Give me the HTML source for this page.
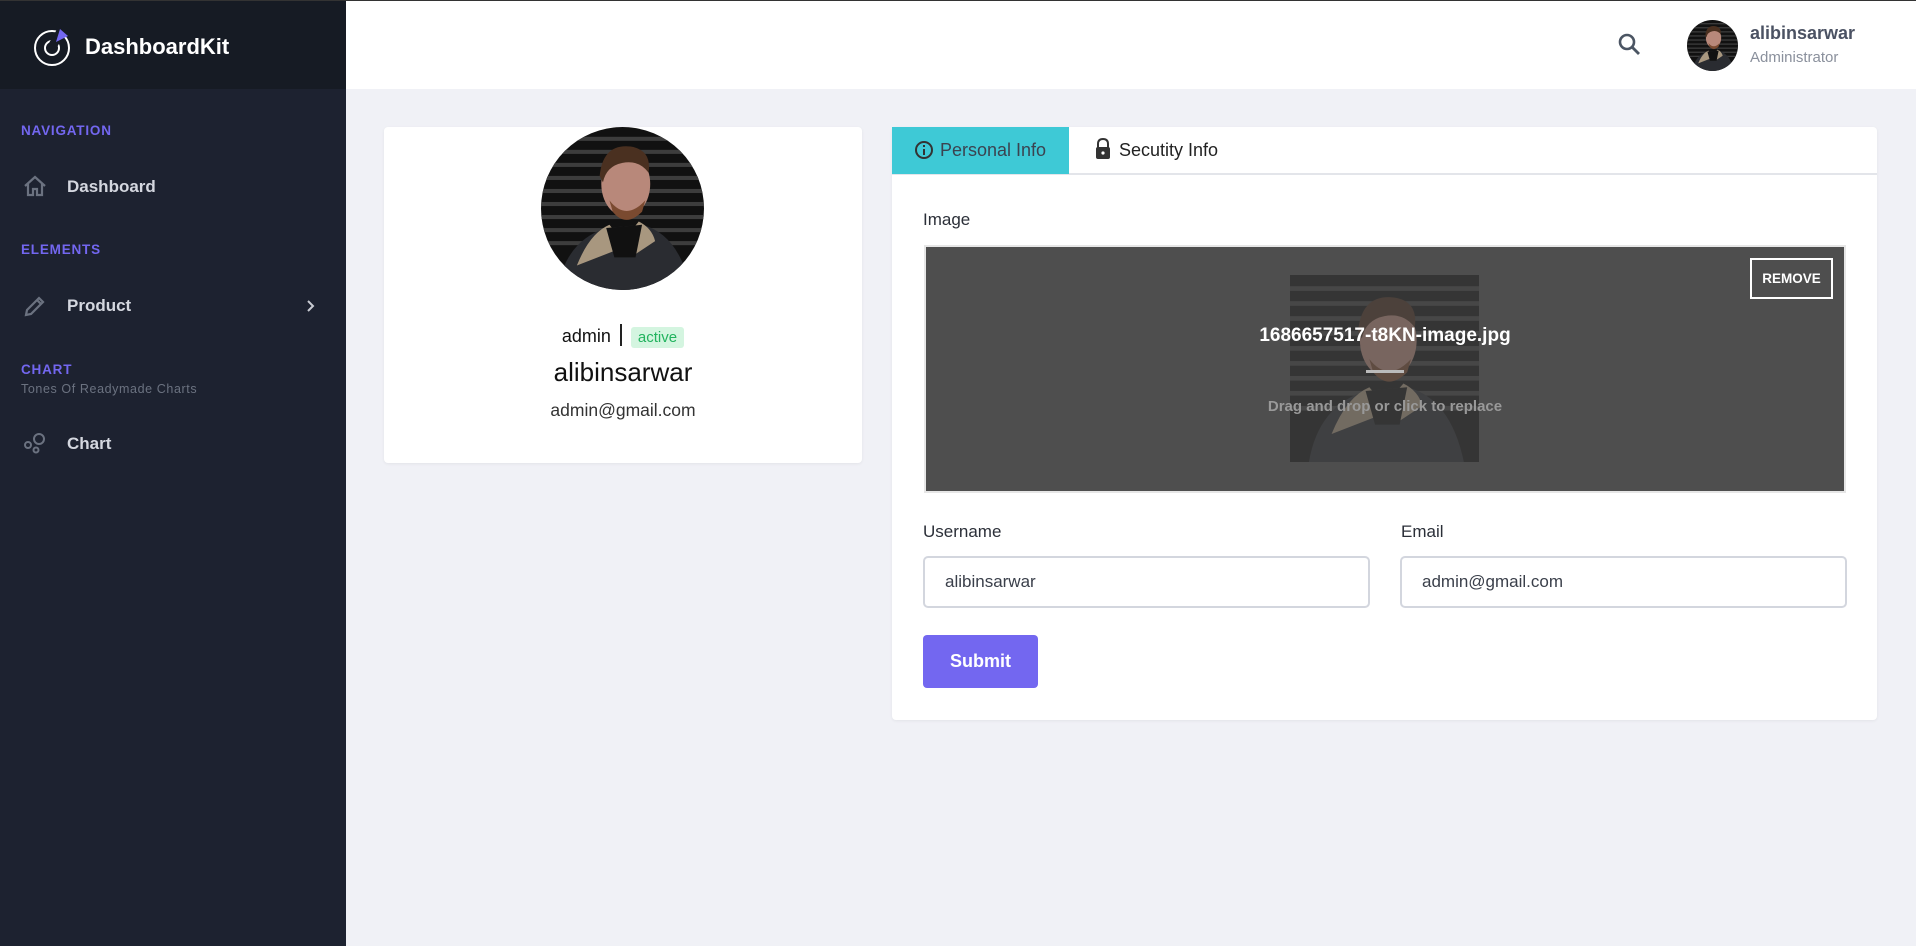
<!DOCTYPE html>
<html><head><meta charset="utf-8">
<style>
*{box-sizing:border-box;margin:0;padding:0}
body{width:1916px;height:945px;background:#f0f1f6;font-family:"Liberation Sans",sans-serif;position:relative;overflow:hidden;border-top:1px solid #333}
.abs{position:absolute}
.sb{left:0;top:0;width:346px;height:945px;background:#1d2230}
.sbh{left:0;top:0;width:346px;height:88px;background:#161b24}
.hdr{left:346px;top:0;width:1570px;height:88px;background:#fff}
.sec{left:21px;font-size:13.5px;font-weight:bold;color:#7367f0;letter-spacing:.8px}
.item{left:67px;font-size:17px;font-weight:bold;color:#d4d7df}
.card{background:#fff;border-radius:4px;box-shadow:0 1px 3px rgba(0,0,0,.06)}
.lbl{font-size:17px;color:#2b2f38}
.inp{border:2px solid #d3d6de;border-radius:5px;height:52px;font-size:17px;color:#3a3f4a;padding:14px 20px}
</style></head><body>
<svg width="0" height="0" style="position:absolute">
<defs>
<symbol id="ph" viewBox="0 0 100 100">
<rect width="100" height="100" fill="#111"/>
<g fill="#3d3d3d"><rect y="6" width="100" height="2.5"/><rect y="14" width="100" height="2.5"/><rect y="22" width="100" height="2.5"/><rect y="30" width="100" height="2.5"/><rect y="38" width="100" height="2.5"/><rect y="46" width="100" height="2.5"/><rect y="54" width="100" height="2.5"/><rect y="62" width="100" height="2.5"/><rect y="70" width="100" height="2.5"/></g>
<path d="M10 100 Q15 70 40 62 L62 60 Q85 66 92 100Z" fill="#2a2c31"/>
<path d="M22 85 Q30 65 42 60 L50 70 L60 58 Q68 62 70 70 L58 78 L45 76Z" fill="#a8977f"/>
<path d="M40 62 L62 60 L58 80 L45 80Z" fill="#111"/>
<ellipse cx="52" cy="35" rx="15" ry="20" fill="#b8887a"/>
<path d="M36 30 Q38 10 55 12 Q68 14 66 28 Q60 20 50 22 Q40 24 38 34Z" fill="#4a3020"/>
<path d="M42 45 Q52 58 64 45 L62 52 Q52 62 44 52Z" fill="#7a4a30"/>
</symbol>
</defs></svg>

<div class="abs sb"></div>
<div class="abs sbh"></div>
<svg class="abs" style="left:33px;top:25px" width="40" height="40" viewBox="0 0 40 40">
<circle cx="19" cy="22" r="17" fill="none" stroke="#fff" stroke-width="2"/>
<circle cx="19" cy="22" r="7" fill="none" stroke="#fff" stroke-width="2"/>
<rect x="19" y="4" width="9" height="16" fill="#161b24" transform="rotate(30 23 13)"/>
<path d="M23 16 L27 3 L35 10Z" fill="#7367f0"/>
</svg>
<div class="abs" style="left:85px;top:33px;font-size:22px;font-weight:bold;color:#fff">DashboardKit</div>

<div class="abs sec" style="top:122px">NAVIGATION</div>
<svg class="abs" style="left:23px;top:174px" width="24" height="22" viewBox="0 0 24 22"><path d="M2 11 L12 2 L22 11 M5 9 V20 H10 V14 H14 V20 H19 V9" fill="none" stroke="#6b7280" stroke-width="2.2"/></svg>
<div class="abs item" style="top:176px">Dashboard</div>
<div class="abs sec" style="top:241px">ELEMENTS</div>
<svg class="abs" style="left:23px;top:293px" width="24" height="24" viewBox="0 0 24 24"><path d="M3 21 L4 16 L16 4 L20 8 L8 20Z M14 6 L18 10" fill="none" stroke="#6b7280" stroke-width="2.2"/></svg>
<div class="abs item" style="top:295px">Product</div>
<svg class="abs" style="left:306px;top:298px" width="10" height="14" viewBox="0 0 10 14"><path d="M2 2 L7 7 L2 12" fill="none" stroke="#c8cbd2" stroke-width="2"/></svg>
<div class="abs sec" style="top:361px">CHART</div>
<div class="abs" style="left:21px;top:381px;font-size:12.5px;color:#6b7280;letter-spacing:.6px">Tones Of Readymade Charts</div>
<svg class="abs" style="left:23px;top:430px" width="24" height="24" viewBox="0 0 24 24"><g fill="none" stroke="#6b7280" stroke-width="2"><circle cx="16" cy="8" r="5"/><circle cx="5" cy="14" r="3"/><circle cx="13" cy="19" r="2.5"/></g></svg>
<div class="abs item" style="top:433px">Chart</div>

<div class="abs hdr"></div>
<svg class="abs" style="left:1617px;top:31px" width="26" height="26" viewBox="0 0 26 26"><circle cx="10" cy="10" r="7" fill="none" stroke="#4b5563" stroke-width="2.6"/><path d="M15 15 L22 22" stroke="#4b5563" stroke-width="2.8"/></svg>
<svg class="abs" style="left:1687px;top:19px;border-radius:50%" width="51" height="51"><use href="#ph"/></svg>
<div class="abs" style="left:1750px;top:22px;font-size:18px;font-weight:bold;color:#4b5263">alibinsarwar</div>
<div class="abs" style="left:1750px;top:48px;font-size:15px;color:#8a909c">Administrator</div>

<div class="abs card" style="left:384px;top:126px;width:478px;height:336px"></div>
<svg class="abs" style="left:541px;top:126px;border-radius:50%" width="163" height="163"><use href="#ph"/></svg>
<div class="abs" style="left:384px;top:323px;width:478px;text-align:center;font-size:18px;color:#111">admin <span style="display:inline-block;width:2px;height:22px;background:#222;vertical-align:-4px;margin:0 4px"></span> <span style="background:#d4f5e0;color:#22b35e;font-size:15px;padding:2px 7px;border-radius:3px">active</span></div>
<div class="abs" style="left:384px;top:356px;width:478px;text-align:center;font-size:26px;color:#111">alibinsarwar</div>
<div class="abs" style="left:384px;top:399px;width:478px;text-align:center;font-size:17.5px;color:#333">admin@gmail.com</div>

<div class="abs card" style="left:892px;top:126px;width:985px;height:593px"></div>
<div class="abs" style="left:892px;top:172px;width:985px;height:2px;background:#e3e5ea"></div>
<div class="abs" style="left:892px;top:126px;width:177px;height:47px;background:#3ec9d6"></div>
<svg class="abs" style="left:914px;top:139px" width="20" height="20" viewBox="0 0 20 20"><circle cx="10" cy="10" r="8" fill="none" stroke="#333" stroke-width="2"/><rect x="9" y="9" width="2" height="6" fill="#333"/><rect x="9" y="5" width="2" height="2" fill="#333"/></svg>
<div class="abs" style="left:940px;top:139px;font-size:18px;color:#3b4350">Personal Info</div>
<svg class="abs" style="left:1094px;top:137px" width="18" height="22" viewBox="0 0 18 22"><path d="M4 10 V6 Q4 1 9 1 Q14 1 14 6 V10" fill="none" stroke="#333" stroke-width="2"/><rect x="2" y="9" width="14" height="12" rx="2" fill="#333"/><circle cx="9" cy="15" r="1.6" fill="#fff"/></svg>
<div class="abs" style="left:1119px;top:139px;font-size:18px;color:#222">Secutity Info</div>

<div class="abs lbl" style="left:923px;top:209px">Image</div>
<div class="abs" style="left:924px;top:244px;width:922px;height:248px;background:#4e4e4e;border:2px solid #e6e6e6"></div>
<svg class="abs" style="left:1290px;top:274px;opacity:.4" width="189" height="187" preserveAspectRatio="none" viewBox="0 0 100 100"><use href="#ph"/></svg>
<div class="abs" style="left:1750px;top:257px;width:83px;height:41px;border:2px solid #fff;color:#fff;font-size:13.5px;font-weight:bold;text-align:center;line-height:37px">REMOVE</div>
<div class="abs" style="left:924px;top:324px;width:922px;text-align:center;color:#fff;font-size:19px;font-weight:bold">1686657517-t8KN-image.jpg</div>
<div class="abs" style="left:1366px;top:369px;width:38px;height:3px;background:#bbb"></div>
<div class="abs" style="left:924px;top:397px;width:922px;text-align:center;color:#999;font-size:15px;font-weight:bold">Drag and drop or click to replace</div>

<div class="abs lbl" style="left:923px;top:521px">Username</div>
<div class="abs inp" style="left:923px;top:555px;width:447px">alibinsarwar</div>
<div class="abs lbl" style="left:1401px;top:521px">Email</div>
<div class="abs inp" style="left:1400px;top:555px;width:447px">admin@gmail.com</div>
<div class="abs" style="left:923px;top:634px;width:115px;height:53px;background:#7367f0;border-radius:4px;color:#fff;font-size:18px;font-weight:bold;text-align:center;line-height:53px">Submit</div>
</body></html>
